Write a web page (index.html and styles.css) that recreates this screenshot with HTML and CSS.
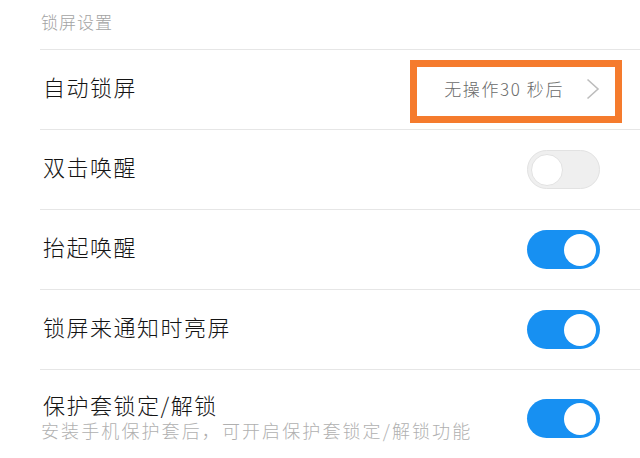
FILE: index.html
```html
<!DOCTYPE html>
<html lang="zh-CN">
<head>
<meta charset="utf-8">
<link rel="stylesheet" href="styles.css">
</head>
<body>
<div class="page">
  <div class="section-title">锁屏设置</div>
  <div class="list">
    <div class="row">
      <div class="label">自动锁屏</div>
      <div class="value">
        <span class="value-text">无操作30 秒后</span>
        <svg class="chevron" width="14" height="22" viewBox="0 0 14 22"><path d="M1.5 1.5 L12 11 L1.5 20.5" fill="none" stroke="#bdbdbd" stroke-width="1.6"/></svg>
        <span class="highlight"></span>
      </div>
    </div>
    <div class="row">
      <div class="label">双击唤醒</div>
      <span class="toggle off"><span class="knob"></span></span>
    </div>
    <div class="row">
      <div class="label">抬起唤醒</div>
      <span class="toggle on"><span class="knob"></span></span>
    </div>
    <div class="row">
      <div class="label">锁屏来通知时亮屏</div>
      <span class="toggle on"><span class="knob"></span></span>
    </div>
    <div class="row tall">
      <div class="texts">
        <div class="label">保护套锁定/解锁</div>
        <div class="sub">安装手机保护套后，可开启保护套锁定/解锁功能</div>
      </div>
      <span class="toggle on"><span class="knob"></span></span>
    </div>
  </div>
</div>
</body>
</html>
```

FILE: styles.css
```css
* { box-sizing: border-box; }
html, body { margin: 0; padding: 0; background: #fff; }
body {
  width: 640px;
  height: 458px;
  overflow: hidden;
  font-family: "Noto Sans CJK SC", "Noto Sans", sans-serif;
  font-weight: 300;
}
.page { padding-left: 40px; }
.section-title {
  height: 49px;
  padding-left: 1px;
  padding-top: 9px;
  font-size: 17px;
  line-height: 26px;
  letter-spacing: 1px;
  color: #a3a3a3;
}
.list { border-top: 1px solid #e6e6e6; }
.row {
  height: 80px;
  border-bottom: 1px solid #e6e6e6;
  display: flex;
  align-items: center;
  justify-content: space-between;
  padding-right: 40px;
  padding-left: 3px;
}
.row > .label { margin-bottom: 7px; }
.label {
  font-size: 22px;
  line-height: 30px;
  letter-spacing: 1.5px;
  color: #141414;
}
.row.tall {
  height: 100px;
  align-items: flex-start;
  padding-top: 19px;
}
.row.tall .toggle { margin-top: 10px; }
.sub {
  font-size: 18px;
  line-height: 24px;
  letter-spacing: 2.1px;
  color: #b0b0b0;
  margin-left: -2px;
  margin-top: -1px;
}
.value {
  position: relative;
  display: flex;
  align-items: center;
  margin-bottom: 2px;
}
.value-text {
  font-size: 17px;
  line-height: 24px;
  letter-spacing: 1.6px;
  color: #6a6a6a;
  margin-right: 22px;
}
.chevron { display: block; }
.highlight {
  position: absolute;
  left: -34px;
  right: -22px;
  top: -17px;
  bottom: -22px;
  border: 7px solid #f57b2d;
}
.toggle {
  position: relative;
  width: 73px;
  height: 39px;
  border-radius: 20px;
  display: block;
  flex: none;
}
.toggle.on { background: #1790f2; }
.toggle.off { background: #efefef; border: 1px solid #e2e2e2; }
.knob {
  position: absolute;
  top: 3.5px;
  width: 32px;
  height: 32px;
  border-radius: 50%;
  background: #fff;
}
.toggle.on .knob { right: 4px; }
.toggle.off .knob { left: 2.5px; top: 2.5px; border: 1px solid #e2e2e2; }
```
